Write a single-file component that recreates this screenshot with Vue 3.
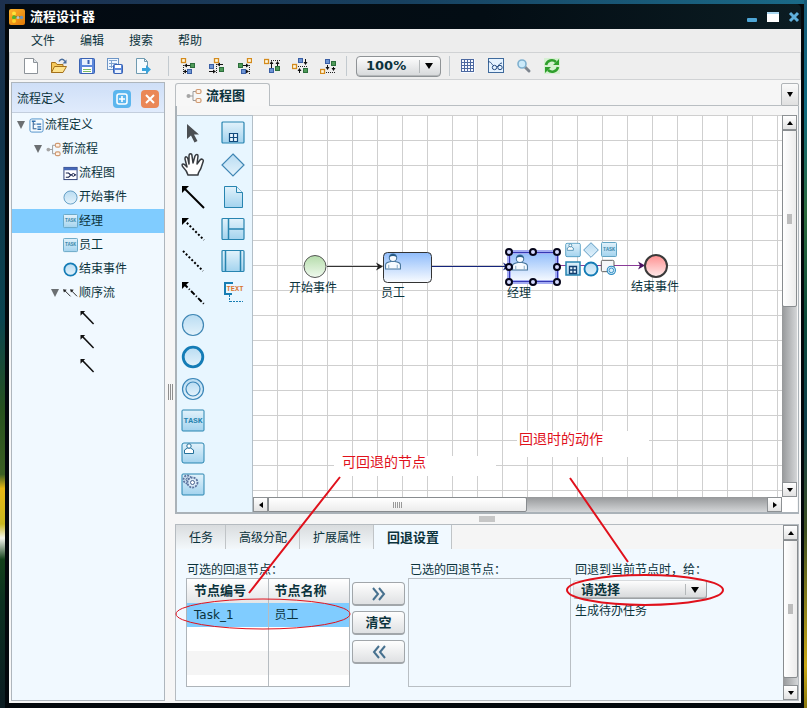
<script setup>
import { ref } from 'vue'

const menus = ['文件', '编辑', '搜索', '帮助']

const fileTools = [
  { icon: 'new', title: '新建' },
  { icon: 'open', title: '打开' },
  { icon: 'save', title: '保存' },
  { icon: 'save-all', title: '全部保存' },
  { icon: 'export', title: '导出' },
]

const alignTools = [
  { title: '左对齐', o: [1, 0], g: [10, 5], b: [7, 11], dots: 'M3.5 7V16', lines: 'M5 7.5H10M4 13.5H7', heads: 'M4 7.5l3-2v4zM3 13.5l3-2v4z' },
  { title: '水平居中', o: [6, 0], g: [11, 9], b: [1, 6], dots: 'M8.5 6V16', lines: 'M10 6.5H15M1 13.5H6', heads: 'M9 6.5l3-2v4zM8 13.5l-3-2v4z' },
  { title: '右对齐', o: [11, 0], g: [2, 5], b: [5, 11], dots: 'M13.5 7V16', lines: 'M7 7.5H11M10 13.5H12', heads: 'M13 7.5l-3-2v4zM13 13.5l-3-2v4z' },
  { title: '顶端对齐', o: [0, 1], g: [11, 8], b: [5, 10], dots: 'M7 2.5H16', lines: 'M7.5 5V10M13.5 5V8', heads: 'M7.5 3l-2 3h4zM13.5 3l-2 3h4z' },
  { title: '垂直居中', o: [0, 6], g: [11, 10], b: [6, 0], dots: 'M6 8.5H16', lines: 'M13.5 1V5M7.5 12V15', heads: 'M13.5 7l-2-3h4zM7.5 10l-2 3h4z' },
  { title: '底端对齐', o: [0, 11], g: [11, 3], b: [5, 1], dots: 'M6 14.5H16', lines: 'M7.5 7V10M13.5 9V11', heads: 'M7.5 12l-2-3h4zM13.5 13l-2-3h4z' },
]

const viewTools = [
  { icon: 'grid', title: '网格' },
  { icon: 'map', title: '缩略图' },
  { icon: 'find', title: '查找' },
  { icon: 'refresh', title: '刷新' },
]

const tree = [
  { level: 0, open: true, icon: 'root', label: '流程定义' },
  { level: 1, open: true, icon: 'flow', label: '新流程' },
  { level: 2, icon: 'diagram', label: '流程图' },
  { level: 2, icon: 'circle', label: '开始事件' },
  { level: 2, icon: 'task', label: '经理' },
  { level: 2, icon: 'task', label: '员工' },
  { level: 2, icon: 'ring', label: '结束事件' },
  { level: 2, open: true, icon: 'sequences', label: '顺序流' },
  { level: 3, icon: 'sequence', label: '' },
  { level: 3, icon: 'sequence', label: '' },
  { level: 3, icon: 'sequence', label: '' },
]
const selectedNode = ref(4)

const palette = [
  ['cursor', 'hand', 'line-solid', 'line-dotted', 'line-plain', 'line-mixed', 'circle', 'ring', 'double', 'task-lg', 'user', 'gears'],
  ['sub', 'diamond', 'doc', 'pool', 'lane', 'text'],
]

const handles = [[256, 137], [280, 137], [304, 137], [256, 152], [304, 152], [256, 167], [280, 167], [304, 167]]

const quickTools = [
  { icon: 'user', x: 312, y: 127 },
  { icon: 'diamond', x: 330, y: 127 },
  { icon: 'task', x: 348, y: 127 },
  { icon: 'sub-sm', x: 312, y: 146 },
  { icon: 'ring', x: 330, y: 146 },
  { icon: 'boundary', x: 347, y: 144 },
]

const tabs = ['任务', '高级分配', '扩展属性', '回退设置']
const activeTab = ref(3)

const zoom = ref('100%')
const action = ref('请选择')
</script>

<template>
  <div class="desktop">
    <svg class="sprite" aria-hidden="true">
      <defs>
        <linearGradient id="g-blue" x1="0" y1="0" x2="0" y2="1">
          <stop offset="0" stop-color="#b9dcf2" /><stop offset="1" stop-color="#e3f2fb" />
        </linearGradient>
        <linearGradient id="g-box" x1="0" y1="0" x2="0" y2="1">
          <stop offset="0" stop-color="#e2f2fb" /><stop offset="1" stop-color="#a3d3ee" />
        </linearGradient>
        <linearGradient id="g-node" x1="0" y1="0" x2="0" y2="1">
          <stop offset="0" stop-color="#8fbcfb" /><stop offset="1" stop-color="#fafcff" />
        </linearGradient>
        <linearGradient id="g-start" x1="0" y1="0" x2="0" y2="1">
          <stop offset="0" stop-color="#b5dcab" /><stop offset="1" stop-color="#f0faee" />
        </linearGradient>
        <linearGradient id="g-end" x1="0" y1="0" x2="0" y2="1">
          <stop offset="0" stop-color="#ff8f8f" /><stop offset="1" stop-color="#ffecec" />
        </linearGradient>
        <linearGradient id="g-logo" x1="0" y1="0" x2="1" y2="1">
          <stop offset="0" stop-color="#ffb52e" /><stop offset="1" stop-color="#e07806" />
        </linearGradient>
      </defs>

      <symbol id="i-logo" viewBox="0 0 16 16">
        <rect width="16" height="16" rx="2" fill="url(#g-logo)" />
        <path d="M5 5v6M6 8h6" stroke="#5b4a10" />
        <circle cx="5" cy="4.500" r="2" fill="#ffe23a" /><circle cx="5" cy="8.500" r="2" fill="#4eb52f" /><circle cx="5" cy="12" r="2" fill="#ffd02a" />
        <circle cx="9" cy="8.500" r="1.500" fill="#b5c7c9" /><circle cx="12.500" cy="8.500" r="1.800" fill="#6d93b5" />
      </symbol>

      <symbol id="i-new" viewBox="0 0 16 16">
        <path d="M1.500.5h9l4 4v11h-13z" fill="#fff" stroke="#8d9399" /><path d="M10.500.5v4h4" fill="#dfe5ea" stroke="#8d9399" />
      </symbol>
      <symbol id="i-open" viewBox="0 0 16 16">
        <path d="M.5 14.500v-10h4l1.500 2h6v3" fill="#f5c95c" stroke="#a4711b" />
        <path d="M.5 14.500l3-6h12l-3.500 6z" fill="#fde28d" stroke="#a4711b" />
        <path d="M8 3.500c1.500-3 4.500-3 6 0" fill="none" stroke="#4a6d9c" stroke-width="1.300" /><path d="M15.500 1.500v4h-4z" fill="#4a6d9c" />
      </symbol>
      <symbol id="i-save" viewBox="0 0 16 16">
        <rect x=".5" y=".5" width="15" height="15" rx="1" fill="#5d89dc" stroke="#3a62b2" />
        <rect x="3" y="1" width="10" height="6" fill="#e9f1fd" /><path d="M9.500 2v4" stroke="#3a62b2" stroke-width="2" />
        <rect x="3" y="9" width="10" height="6" fill="#fff" /><path d="M4 11.500h8M4 13.500h8" stroke="#7dbb63" />
      </symbol>
      <symbol id="i-save-all" viewBox="0 0 16 16">
        <rect x=".5" y=".5" width="11" height="11" fill="#eff6ff" stroke="#6d95c6" />
        <path d="M2 2.500h8M2 5.500h8M2 8.500h5M4.500 2v8" stroke="#7fa3d0" />
        <rect x="6.500" y="6.500" width="9" height="9" rx="1" fill="#5d89dc" stroke="#3a62b2" />
        <rect x="8" y="7" width="6" height="3" fill="#fff" /><rect x="8" y="12" width="6" height="3" fill="#e9f1fd" />
      </symbol>
      <symbol id="i-export" viewBox="0 0 16 16">
        <path d="M1.500.5h8l3 3v12h-11z" fill="#f5fbff" stroke="#6f9ab0" /><path d="M9.500.5v3h3" fill="none" stroke="#6f9ab0" />
        <path d="M7 10h4V7l5 4.500-5 4.500v-3H7z" fill="#38a3dc" />
      </symbol>
      <symbol id="i-grid" viewBox="0 0 16 16">
        <rect x="1" y="1" width="14" height="14" fill="#f7faff" />
        <path d="M1.500 1v13M4.500 1v13M7.500 1v13M10.500 1v13M13.500 1v13M1 1.500h13M1 4.500h13M1 7.500h13M1 10.500h13M1 13.500h13" stroke="#4c68a0" fill="none" />
      </symbol>
      <symbol id="i-map" viewBox="0 0 16 16">
        <rect x=".5" y=".5" width="15" height="14" fill="#e6f3ff" stroke="#3f6a9c" />
        <path d="M0 4c3-1 3 2 6 4M9 9c2-1 2-4 5-4" fill="none" stroke="#244a80" /><circle cx="6.500" cy="9.500" r="2.200" fill="none" stroke="#244a80" /><circle cx="12" cy="9.500" r="2.200" fill="none" stroke="#244a80" />
      </symbol>
      <symbol id="i-find" viewBox="0 0 16 16">
        <path d="M9 9l4 4" stroke="#7d858f" stroke-width="3" stroke-linecap="round" /><circle cx="6" cy="6" r="4" fill="#cbeafa" stroke="#7fb0cf" stroke-width="1.600" />
      </symbol>
      <symbol id="i-refresh" viewBox="0 0 16 16">
        <rect width="16" height="16" fill="#d6f0d2" />
        <path d="M2 7c1-5 7-6 10-3M14 9c-1 5-7 6-10 3" fill="none" stroke="#2f9f2c" stroke-width="2.600" />
        <path d="M15 1v6H9zM1 15V9h6z" fill="#2f9f2c" />
      </symbol>

      <symbol id="i-root" viewBox="0 0 16 16">
        <rect x="1" y="1" width="14" height="14" rx="2" fill="#f6fbff" stroke="#4c8fc9" />
        <path d="M4.500 4v8M5 6.500h2M5 11.500h3" stroke="#1d4f86" /><path d="M3 3.500h4M8 6.500h5M9 9.500h4M9 12h4" stroke="#2f6fae" stroke-width="1.500" />
      </symbol>
      <symbol id="i-flow" viewBox="0 0 16 16">
        <path d="M3 8h4M10 3.500H7v9h3" fill="none" stroke="#9b9b9b" /><circle cx="2.500" cy="8" r="2" fill="#a5a5a5" />
        <rect x="10" y="1.500" width="5" height="4" rx="1.500" fill="#fff2e6" stroke="#d09a72" stroke-width="1.200" /><rect x="10" y="10.500" width="5" height="4" rx="1.500" fill="#fff2e6" stroke="#d09a72" stroke-width="1.200" />
      </symbol>
      <symbol id="i-diagram" viewBox="0 0 16 16">
        <rect x="1" y="1.500" width="14" height="13" fill="#fff" stroke="#26386e" /><path d="M1 3h14" stroke="#4668b8" stroke-width="3" />
        <path d="M3 7.500h3l2 2h6M3 12h3l2-2" fill="none" stroke="#16204a" stroke-width="1.200" /><circle cx="11" cy="9.500" r="1.500" fill="#fff" stroke="#16204a" />
      </symbol>
      <symbol id="i-sequences" viewBox="0 0 16 16">
        <path d="M2 5l6 6M9 5l6 6" stroke="#222" /><path d="M0 3.500l4 .5-3 3zM7.500 3.500l4 .5-3 3z" fill="#222" />
      </symbol>
      <symbol id="i-sequence" viewBox="0 0 16 16">
        <path d="M2 2l12.500 13" stroke="#111" stroke-width="1.600" /><path d="M.5 1h5l-5 5z" fill="#111" />
      </symbol>
      <symbol id="i-task" viewBox="0 0 16 16">
        <rect x=".5" y=".5" width="15" height="14" rx="1" fill="url(#g-box)" stroke="#64a5c4" />
      </symbol>

      <symbol id="i-cursor" viewBox="0 0 24 24">
        <path d="M6 3v15l4-3.500 3.500 7 3-1.500-3.500-6.500h5z" fill="#4b4f53" />
      </symbol>
      <symbol id="i-hand" viewBox="0 0 24 24">
        <path d="M7 22c-1-4-3-6-5-8-2-3 0-4 2-2l2 2L4 6c0-3 2-3 3 0l1 5V3c0-3 3-3 3 0l1 7 2-7c1-2 3-2 3 0l-1 8 3-4c2-2 4 0 3 2l-2 6c-1 3-3 4-3 7z" fill="#fff" stroke="#373b40" stroke-width="1.500" stroke-linejoin="round" />
      </symbol>
      <symbol id="i-line-solid" viewBox="0 0 24 24"><path d="M3 3l20 20" stroke="#000" stroke-width="2" /><path d="M1 1h7L1 8z" /></symbol>
      <symbol id="i-line-dotted" viewBox="0 0 24 24"><path d="M3 3l20 20" stroke="#000" stroke-width="2" stroke-dasharray="2 2" /><path d="M1 1h7L1 8z" /></symbol>
      <symbol id="i-line-plain" viewBox="0 0 24 24"><path d="M2 2l20 20" stroke="#000" stroke-width="2" stroke-dasharray="2 2" /></symbol>
      <symbol id="i-line-mixed" viewBox="0 0 24 24"><path d="M3 3l20 20" stroke="#000" stroke-width="2" stroke-dasharray="5 2 1 2" /><path d="M1 1h7L1 8z" /></symbol>
      <symbol id="i-circle" viewBox="0 0 24 24"><circle cx="12" cy="12" r="10.500" fill="url(#g-blue)" stroke="#3f86b4" stroke-width="1.200" /></symbol>
      <symbol id="i-ring" viewBox="0 0 24 24"><circle cx="12" cy="12" r="9.800" fill="url(#g-blue)" stroke="#147cb6" stroke-width="2.800" /></symbol>
      <symbol id="i-double" viewBox="0 0 24 24">
        <circle cx="12" cy="12" r="10.500" fill="url(#g-blue)" stroke="#3b86b8" stroke-width="1.200" /><circle cx="12" cy="12" r="7" fill="url(#g-blue)" stroke="#3b86b8" stroke-width="1.200" />
      </symbol>
      <symbol id="i-task-lg" viewBox="0 0 24 24">
        <rect x="1" y="1" width="22" height="21" rx="1" fill="url(#g-box)" stroke="#2784b0" />
      </symbol>
      <symbol id="i-user" viewBox="0 0 24 24">
        <rect x="1" y="2" width="22" height="20" rx="2" fill="url(#g-box)" stroke="#2784b0" />
        <path d="M3.500 11V9l3-2h3l3 2v3.500h-9z" fill="#fff" stroke="#24719b" /><circle cx="8" cy="5" r="2.200" fill="#fff" stroke="#24719b" />
      </symbol>
      <symbol id="i-gears" viewBox="0 0 24 24">
        <rect x="1" y="1" width="22" height="21" rx="1" fill="url(#g-box)" stroke="#2784b0" />
        <circle cx="6.500" cy="6.500" r="4" fill="#cfe3f3" stroke="#5d74a0" stroke-width="1.800" stroke-dasharray="2 1" /><circle cx="6.500" cy="6.500" r="1.500" fill="none" stroke="#49618e" />
        <circle cx="11.500" cy="9.500" r="5" fill="#dcecf8" stroke="#5d74a0" stroke-width="1.800" stroke-dasharray="2 1" /><circle cx="11.500" cy="9.500" r="2" fill="#fff" stroke="#49618e" />
      </symbol>
      <symbol id="i-sub" viewBox="0 0 24 24">
        <rect x="1" y="1" width="22" height="21" rx="1" fill="url(#g-box)" stroke="#2784b0" stroke-width="1.200" /><path d="M8.500 12.500h8v8h-8zM12.500 12.500v8M8.500 16.500h8" fill="#e8f6ff" stroke="#124b7d" stroke-width="1.200" />
      </symbol>
      <symbol id="i-sub-sm" viewBox="0 0 16 16">
        <rect x="1" y="1" width="14" height="13" fill="url(#g-box)" stroke="#2784b0" stroke-width="1.500" /><path d="M4.500 5.500h7v7h-7zM8 5.500v7M4.500 9h7" fill="#e8f6ff" stroke="#123f70" stroke-width="1.300" />
      </symbol>
      <symbol id="i-diamond" viewBox="0 0 24 24"><path d="M12 1l11 11-11 11L1 12z" fill="url(#g-blue)" stroke="#3f86b4" stroke-width="1.200" /></symbol>
      <symbol id="i-doc" viewBox="0 0 24 24"><path d="M3.500 1.500h12l6 6v15h-18z" fill="url(#g-box)" stroke="#2784b0" /><path d="M15.500 1.500v6h6" fill="#e4f3fc" stroke="#2784b0" /></symbol>
      <symbol id="i-pool" viewBox="0 0 24 24"><rect x="1" y="1.500" width="22" height="21" rx="1" fill="url(#g-box)" stroke="#2784b0" stroke-width="1.200" /><path d="M7.500 2v20M8 12h15" stroke="#2784b0" stroke-width="1.500" /></symbol>
      <symbol id="i-lane" viewBox="0 0 24 24"><rect x="1" y="1.500" width="22" height="21" rx="1" fill="url(#g-box)" stroke="#2784b0" stroke-width="1.200" /><path d="M4.500 2v20M19.500 2v20" stroke="#2784b0" stroke-width="1.500" /></symbol>
      <symbol id="i-text" viewBox="0 0 24 24">
        <path d="M12 2H4v11h7" fill="none" stroke="#167db3" stroke-width="2" /><path d="M8.500 14v7M9 20.500h13" stroke="#167db3" stroke-dasharray="2 1" />
      </symbol>
      <symbol id="i-boundary" viewBox="0 0 24 24">
        <rect x="2" y="2" width="19" height="17" rx="2" fill="#f4f6f8" stroke="#555" stroke-width="1.400" /><circle cx="17" cy="17" r="6.200" fill="#d9eefb" stroke="#2b8bc2" stroke-width="1.600" /><circle cx="17" cy="17" r="3.500" fill="#d9eefb" stroke="#2b8bc2" stroke-width="1.400" />
      </symbol>
      <symbol id="i-person" viewBox="0 0 16 16">
        <path d="M1 15V11c0-2 2-2 5-3h4c3 1 5 1 5 3v4z" fill="#f7fbff" stroke="#47759c" /><path d="M4 11v4M12 11v4" stroke="#8fb0cb" />
        <circle cx="8" cy="4.500" r="3.500" fill="#f7fbff" stroke="#47759c" /><path d="M4.500 4C4.500 0 11.500 0 11.500 4c-2-1.500-5-1.500-7 0z" fill="#245a88" />
      </symbol>
    </svg>

    <main class="window">
      <header class="titlebar">
        <svg class="icon16"><use href="#i-logo" /></svg>
        <h1>流程设计器</h1>
        <div class="controls">
          <button aria-label="最小化"><svg viewBox="0 0 14 14"><rect x="2" y="8" width="10" height="4" rx="1" fill="#4ea6d6" /></svg></button>
          <button aria-label="最大化"><svg viewBox="0 0 14 14"><rect x="1" y="2" width="12" height="10" fill="#fff" /><rect x="1" y="2" width="12" height="2" fill="#a9d7f0" /></svg></button>
          <button aria-label="关闭"><svg viewBox="0 0 14 14"><path d="M3 3l8 8M11 3l-8 8" stroke="#5fb0dc" stroke-width="3" /></svg></button>
        </div>
      </header>

      <nav class="menubar">
        <button v-for="m in menus" :key="m">{{ m }}</button>
      </nav>

      <div class="toolbar" role="toolbar">
        <button v-for="t in fileTools" :key="t.icon" class="tool" :aria-label="t.title"><svg class="icon16"><use :href="'#i-' + t.icon" /></svg></button>
        <span class="sep sep-wide"></span>
        <button v-for="t in alignTools" :key="t.title" class="tool" :aria-label="t.title">
          <svg class="icon16" viewBox="0 0 16 16">
            <path :d="t.dots" stroke="#222" stroke-dasharray="1 1" /><path :d="t.lines" stroke="#111" /><path :d="t.heads" fill="#111" />
            <rect :x="t.o[0] + 0.5" :y="t.o[1] + 0.5" width="4" height="4" fill="#fff8e0" stroke="#d48a1c" stroke-width="1.300" />
            <rect :x="t.g[0] + 0.5" :y="t.g[1] + 0.5" width="4" height="4" fill="#4f9a58" stroke="#2c6e3c" />
            <rect :x="t.b[0] + 0.5" :y="t.b[1] + 0.5" width="4" height="4" fill="#6d94d3" stroke="#3a5fa5" />
          </svg>
        </button>
        <span class="sep"></span>
        <div class="combo zoom">
          <select v-model="zoom" aria-label="缩放比例"><option>100%</option></select>
          <svg viewBox="0 0 8 6"><path d="M0 0h8L4 6z" /></svg>
        </div>
        <span class="sep"></span>
        <button v-for="t in viewTools" :key="t.icon" class="tool" :aria-label="t.title"><svg class="icon16"><use :href="'#i-' + t.icon" /></svg></button>
      </div>

      <div class="workspace">
        <aside class="explorer">
          <header>
            <h2>流程定义</h2>
            <button class="add" aria-label="添加"><svg viewBox="0 0 18 18"><rect x="4" y="4" width="10" height="10" rx="2" fill="none" stroke="#fff" stroke-width="1.600" /><path d="M9 6v6M6 9h6" stroke="#fff" stroke-width="1.600" /></svg></button>
            <button class="remove" aria-label="删除"><svg viewBox="0 0 18 18"><path d="M5 5l8 8M13 5l-8 8" stroke="#fff" stroke-width="2" /></svg></button>
          </header>
          <ul class="tree">
            <li v-for="(n, i) in tree" :key="i">
              <button :class="['node', 'level' + n.level, { selected: i === selectedNode }]" :aria-label="n.label || '连线'" @click="selectedNode = i">
                <svg class="twist" viewBox="0 0 10 10"><path v-if="n.open" d="M1 1h8L5 9z" fill="#6b6f72" /></svg>
                <svg class="icon15" viewBox="0 0 16 16">
                  <use :href="'#i-' + n.icon" width="16" height="16" />
                  <text v-if="n.icon === 'task'" class="micro" x="8" y="9">TASK</text>
                </svg>
                <span>{{ n.label }}</span>
              </button>
            </li>
          </ul>
        </aside>

        <div class="split-v"><i></i><i></i><i></i></div>

        <section class="content">
          <div class="doc-tabs">
            <button class="doc-tab"><svg class="icon16"><use href="#i-flow" /></svg>流程图</button>
            <span class="fill"></span>
            <button class="more" aria-label="更多"><svg viewBox="0 0 8 6"><path d="M1 0h6L4 5z" /></svg></button>
          </div>

          <div class="editor">
            <div class="palette">
              <div v-for="(column, c) in palette" :key="c" class="column">
                <button v-for="p in column" :key="p" :aria-label="p">
                  <svg viewBox="0 0 24 24">
                    <use :href="'#i-' + p" width="24" height="24" />
                    <text v-if="p === 'task-lg'" class="task-label" x="12" y="14">TASK</text>
                    <text v-if="p === 'text'" class="text-label" x="14" y="10">TEXT</text>
                  </svg>
                </button>
              </div>
            </div>

            <div class="board">
              <div class="canvas">
                <svg>
                  <path d="M74 151.500H128" stroke="#333" /><path d="M130 151.500l-7-4 2 4-2 4z" fill="#222" />
                  <path d="M179 151.500H254" stroke="#14247c" /><path d="M257 151.500l-7-4 2 4-2 4z" fill="#14247c" />
                  <path d="M304 150.500H390" stroke="#8a3b98" /><path d="M392 150.500l-7-4 2 4-2 4z" fill="#4a1060" />
                  <circle cx="62" cy="151.500" r="11" fill="url(#g-start)" stroke="#555" />
                  <text x="36" y="177">开始事件</text>
                  <rect x="130.500" y="137.500" width="48" height="30" rx="4" fill="url(#g-node)" stroke="#333" />
                  <use href="#i-person" x="131" y="138" width="18" height="17" />
                  <text x="128" y="182">员工</text>
                  <rect x="256" y="137" width="48" height="30" rx="3" fill="url(#g-node)" stroke="#a4acf2" stroke-width="4" />
                  <rect x="256.500" y="137.500" width="48" height="29" fill="none" stroke="#3438b4" />
                  <use href="#i-person" x="258" y="139" width="18" height="17" />
                  <circle v-for="(h, i) in handles" :key="i" :cx="h[0]" :cy="h[1]" r="3" fill="#d5dbff" stroke="#05051a" stroke-width="2" />
                  <text x="254" y="182">经理</text>
                  <use v-for="q in quickTools" :key="q.icon" :href="'#i-' + q.icon" :x="q.x" :y="q.y" width="16" height="16" />
                  <text class="micro" x="356" y="136">TASK</text>
                  <circle cx="403" cy="151" r="11" fill="url(#g-end)" stroke="#3a3a3a" stroke-width="2" />
                  <text x="378" y="176">结束事件</text>
                </svg>
              </div>
              <div class="scroll vertical">
                <button aria-label="向上"><svg viewBox="0 0 8 8"><path d="M4 2l3 4H1z" /></svg></button>
                <div class="thumb canvas-v"><i></i></div>
                <span class="rest"></span>
                <button aria-label="向下"><svg viewBox="0 0 8 8"><path d="M4 6l3-4H1z" /></svg></button>
              </div>
              <div class="scroll horizontal">
                <button aria-label="向左"><svg viewBox="0 0 8 8"><path d="M2 4l4-3v6z" /></svg></button>
                <div class="thumb canvas-h"><i class="grip"></i></div>
                <span class="rest wide"></span>
                <button aria-label="向右"><svg viewBox="0 0 8 8"><path d="M6 4L2 1v6z" /></svg></button>
              </div>
            </div>
          </div>

          <div class="split-h"><i></i></div>

          <div class="props">
            <div class="props-main">
              <div class="prop-tabs" role="tablist">
                <button v-for="(t, i) in tabs" :key="t" role="tab" :aria-selected="i === activeTab" :class="{ active: i === activeTab }" @click="activeTab = i">{{ t }}</button>
              </div>
              <div class="form">
                <div class="field available">
                  <span id="available-label">可选的回退节点：</span>
                  <div class="table-box">
                    <table aria-labelledby="available-label">
                      <thead><tr><th>节点编号</th><th>节点名称</th></tr></thead>
                      <tbody>
                        <tr class="picked"><td>Task_1</td><td>员工</td></tr>
                        <tr><td></td><td></td></tr>
                        <tr class="odd"><td></td><td></td></tr>
                        <tr><td></td><td></td></tr>
                      </tbody>
                    </table>
                  </div>
                </div>
                <div class="moves">
                  <button aria-label="添加"><svg viewBox="0 0 16 14"><path d="M2 1l5 6-5 6M8 1l5 6-5 6" /></svg></button>
                  <button>清空</button>
                  <button aria-label="移除"><svg viewBox="0 0 16 14"><path d="M8 1L3 7l5 6M14 1L9 7l5 6" /></svg></button>
                </div>
                <div class="field chosen">
                  <label for="chosen">已选的回退节点：</label>
                  <select id="chosen" multiple></select>
                </div>
                <div class="field target">
                  <label for="action">回退到当前节点时，给：</label>
                  <div class="combo action">
                    <select id="action" v-model="action"><option>请选择</option></select>
                    <svg viewBox="0 0 8 6"><path d="M0 0h8L4 6z" /></svg>
                  </div>
                  <span>生成待办任务</span>
                </div>
              </div>
            </div>
            <div class="scroll vertical">
              <button aria-label="向上"><svg viewBox="0 0 8 8"><path d="M4 2l3 4H1z" /></svg></button>
              <div class="thumb props-v"><i></i></div>
              <span class="rest"></span>
              <button aria-label="向下"><svg viewBox="0 0 8 8"><path d="M4 6l3-4H1z" /></svg></button>
            </div>
          </div>
        </section>
      </div>
    </main>

    <svg class="notes">
      <rect x="334" y="456" width="162" height="20" fill="#fff" />
      <rect x="517" y="431" width="132" height="26" fill="#fff" />
      <text x="342" y="467">可回退的节点</text>
      <text x="519" y="444">回退时的动作</text>
      <path d="M340 477L249 593M570 478l58 84" />
      <ellipse class="thin" cx="263" cy="614" rx="87" ry="15" />
      <ellipse cx="645" cy="590" rx="78" ry="15" />
    </svg>
  </div>
</template>

<style>
body { background: #06101a; }
</style>

<style scoped>
.desktop {
  position: relative;
  box-sizing: border-box;
  min-height: 100vh;
  padding: 4px 3px 0 5px;
  display: flex;
  font: 12px/16px "DejaVu Sans", "Noto Sans CJK SC", sans-serif;
  color: #0b333c;
  background:
    linear-gradient(180deg, #175a78 0, #0e6a80 15%, #2b6a3c 30%, #0b4a3a 45%, #0e3f4c 60%, #3d4f20 75%, #c9a818 94%, #8a7a10 100%) right / 3px 100% no-repeat,
    linear-gradient(180deg, #1d304e 0, #10334a 20%, #0a4450 45%, #27521e 58%, #3c6024 67%, #e8b814 69%, #c8b820 74%, #f4f6ee 76%, #12401a 79%, #0b3020 85%, #0c1c22 100%) left / 5px 100% no-repeat,
    linear-gradient(90deg, #1c304f, #17405f 50%, #1a6a88) top / 100% 4px no-repeat,
    #0a0a08;
}
* { box-sizing: border-box; }
button, select { font: inherit; color: inherit; margin: 0; padding: 0; border: 0; background: none; }
button { display: flex; align-items: center; justify-content: center; }
h1, h2, ul { margin: 0; padding: 0; font-size: 12px; font-weight: normal; list-style: none; }
svg { display: block; flex: none; }
.sprite { position: absolute; width: 0; height: 0; }
.icon16 { width: 16px; height: 16px; }
.icon15 { width: 15px; height: 15px; }

.window {
  flex: 1;
  min-width: 0;
  display: flex;
  flex-direction: column;
  padding: 0 3px 5px 4px;
  border-radius: 5px 5px 0 0;
  background: #03080c;
}
.titlebar { display: flex; align-items: center; gap: 5px; height: 25px; border-radius: 5px 5px 0 0; background: linear-gradient(90deg, #030a12, #030d14 60%, #0b1c22); }
.titlebar h1 { flex: 1; font-size: 13px; font-weight: bold; color: #fff; }
.controls { display: flex; gap: 7px; }
.controls svg { width: 14px; height: 14px; }

.menubar { display: flex; gap: 25px; height: 23px; padding: 1px 0 0 22px; background: #ededed; }

.toolbar { display: flex; align-items: center; height: 28px; padding-left: 7px; border: 1px solid #d0d2d4; border-bottom-width: 1px; background: #eee; }
.tool { width: 28px; height: 26px; }
.sep { width: 1px; height: 20px; margin: 0 9px 0 4px; background: #c3cacf; }
.sep-wide { margin: 0 5px 0 11px; }
.combo + .sep { margin: 0 4px 0 8px; }

.combo { position: relative; border: 1px solid #8f9396; border-radius: 4px; background: linear-gradient(#fdfdfd, #d6d8da); box-shadow: inset 0 -1px #b5b8ba; }
.combo select { display: block; width: 100%; appearance: none; font-weight: bold; font-size: 13px; }
.combo svg { position: absolute; right: 7px; top: 50%; width: 8px; height: 6px; margin-top: -3px; pointer-events: none; }
.combo::after { content: ""; position: absolute; right: 20px; top: 3px; bottom: 3px; width: 1px; background: #b4b8ba; }
.zoom { width: 85px; height: 21px; }
.zoom select { height: 19px; padding-left: 9px; }
.action { width: 134px; height: 19px; border-radius: 3px; border-color: #d7dadd #9da1a4 #9da1a4 #d7dadd; }
.action select { height: 17px; padding-left: 7px; }

.workspace { flex: 1; display: flex; padding: 2px; background: #f6f6f6; }
.explorer { flex: none; width: 154px; border: 1px solid #aeb6bd; background: #f1f9ff; }
.explorer header { display: flex; align-items: center; height: 30px; padding: 2px 5px 0 5px; gap: 10px; background: linear-gradient(#cfdff7, #e0ebfc); border-bottom: 1px solid #c3cedd; }
.explorer h2 { flex: 1; }
.explorer header svg { width: 18px; height: 18px; }
.add, .remove { border-radius: 4px; }
.add { background: #5cb6ee; }
.remove { background: #ea8757; }

.node { width: 100%; height: 24px; justify-content: flex-start; gap: 1px; }
.node.selected { background: #80ccff; }
.level0 { padding-left: 4px; }
.level1 { padding-left: 21px; }
.level2 { padding-left: 38px; }
.level3 { padding-left: 55px; }
.twist { width: 10px; height: 10px; margin-right: 2px; }

.split-v { flex: none; width: 10px; display: flex; align-items: center; justify-content: center; gap: 1px; }
.split-v i { width: 1px; height: 16px; background: #8f8f8f; }

.content { flex: 1; min-width: 0; display: flex; flex-direction: column; }
.doc-tabs { display: flex; align-items: flex-end; height: 24px; }
.doc-tab { width: 95px; height: 23px; gap: 4px; justify-content: flex-start; padding: 2px 0 0 10px; font-size: 13px; font-weight: bold; border: 1px solid #b9bec2; border-bottom: 0; border-radius: 3px 3px 0 0; background: #f7f7f7; }
.fill { flex: 1; align-self: stretch; border-bottom: 1px solid #b9bec2; }
.more { width: 18px; height: 23px; border: 1px solid #b0b4b7; border-radius: 2px 2px 0 0; background: linear-gradient(#fafafa, #e0e0e0); }
.more svg { width: 8px; height: 6px; }

.editor { flex: 1; display: flex; padding: 9px 1px 0 0; border: 1px solid #aab2b8; border-width: 0 1px 2px 2px; background: #f6f6f6; }
.palette { flex: none; width: 76px; display: flex; gap: 8px; padding-top: 1px; border: 1px solid #b3bfc8; border-width: 1px 1px 0 0; background: #e8f6ff; }
.column button { width: 32px; height: 32px; }
.column svg { width: 24px; height: 24px; }

.board { flex: 1; min-width: 0; display: grid; grid-template: 1fr 15px / 1fr 15px; background: #fff; }
.canvas {
  min-width: 0;
  background:
    linear-gradient(90deg, #cfcfcf 1px, transparent 1px) 24px 0 / 25px 25px,
    linear-gradient(#cfcfcf 1px, transparent 1px) 0 0 / 25px 25px,
    #fff;
}
.canvas svg { width: 100%; height: 100%; }
.canvas text { fill: #0b333c; }
.window .micro { font: bold 5px "Liberation Mono", monospace; fill: #3f8aac; text-anchor: middle; }
.window .task-label { font: bold 8px "Liberation Mono", monospace; fill: #2784b0; text-anchor: middle; }
.window .text-label { font: bold 7px "Liberation Mono", monospace; fill: #d97430; text-anchor: middle; }

.scroll { display: flex; }
.scroll button { flex: none; width: 15px; height: 15px; border: 1px solid #8d9194; background: linear-gradient(#fff, #e2e2e2); }
.scroll button svg { width: 8px; height: 8px; }
.scroll.vertical { flex-direction: column; width: 15px; background: linear-gradient(90deg, #96989a, #d4d6d8); }
.scroll.horizontal { height: 15px; background: linear-gradient(#96989a, #d4d6d8); }
.thumb { display: flex; align-items: center; justify-content: center; border: 1px solid #888c8f; border-radius: 0 0 2px 2px; background: linear-gradient(90deg, #fff, #ececec); }
.horizontal .thumb { background: linear-gradient(#fff, #ececec); border-radius: 0 2px 2px 0; }
.thumb i { width: 5px; height: 10px; background: #bcbcbc; }
.thumb .grip { width: 9px; height: 6px; background: repeating-linear-gradient(90deg, #999 0 1px, transparent 1px 2px); }
.rest { flex: 1; }
.rest.wide { flex: 14; }
.canvas-v { flex: 1; }
.canvas-h { flex: 15; }
.props-v { flex: 20; }

.split-h { display: flex; align-items: center; justify-content: center; height: 10px; }
.split-h i { width: 16px; height: 6px; background: #c6c6c6; }

.props { flex: none; display: flex; border: 1px solid #b5bbc0; background: #f1f9ff; }
.props-main { flex: 1; min-width: 0; }
.prop-tabs { display: flex; height: 24px; background: #f5f5f5; }
.prop-tabs button { padding: 2px 12px 0 13px; border-right: 1px solid #c0c4c7; background: linear-gradient(#d9dcde, #f3f8fb); }
.prop-tabs .active { font-size: 13px; font-weight: bold; background: #f1f9ff; }
.form { display: flex; padding: 13px 10px 13px; }
.field { display: flex; flex-direction: column; }
.available { width: 164px; }
.available > span { padding-left: 1px; }
.table-box { height: 109px; overflow: hidden; border: 1px solid #aeb4b9; }
table { width: 100%; border-collapse: collapse; table-layout: fixed; background: #fff; }
tr { height: 24px; }
th, td { padding: 0 0 0 7px; height: 24px; text-align: left; font-weight: normal; }
th { font-size: 13px; font-weight: bold; background: linear-gradient(#fff, #e3e5e7); }
th + th, td + td { border-left: 1px solid #b6bcc1; padding-left: 6px; }
.picked { background: #80ccff; }
.odd { background: #f5f5f5; }

.moves { display: flex; flex-direction: column; gap: 5px; width: 58px; padding: 20px 3px 0 2px; }
.moves button { height: 24px; font-size: 13px; font-weight: bold; border: 1px solid #a1a6aa; border-bottom-width: 2px; border-radius: 4px; background: linear-gradient(#fefefe, #dfe1e3); }
.moves svg { width: 16px; height: 14px; fill: none; stroke: #47718f; stroke-width: 2; }
.chosen { width: 165px; }
.chosen label { padding-left: 2px; }
.chosen select { width: 163px; height: 109px; border: 1px solid #b9bfc4; border-radius: 0; background: #f1f9ff; }
.target label, .target > span { padding-left: 2px; }
.target .combo { margin: 2px 0 4px; }

.notes { position: absolute; left: 0; top: 0; width: 100%; height: 100%; pointer-events: none; fill: none; stroke: #e0111c; stroke-width: 2; }
.notes rect { stroke: none; }
.notes text { font-size: 14px; fill: #e0111c; stroke: none; }
.notes .thin { stroke-width: 1; }
</style>
